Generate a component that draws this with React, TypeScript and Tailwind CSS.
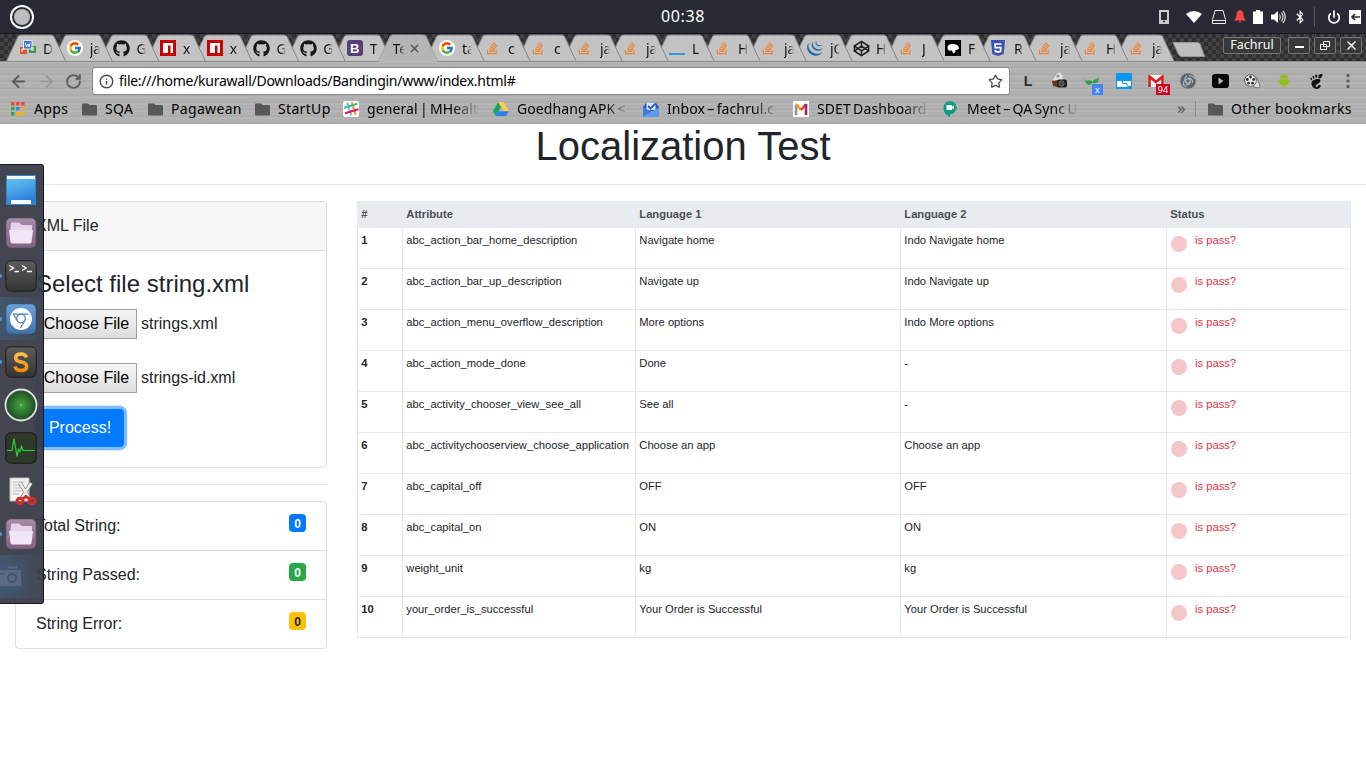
import type { ReactNode } from "react";
import { FcGoogle } from "react-icons/fc";
import { FaGithub, FaStackOverflow, FaBluetoothB } from "react-icons/fa";
import { SiJquery, SiGnome } from "react-icons/si";
import { ArrowLeft, ArrowRight, Codepen as CodepenOutline, Info, Power, RotateCw, Star, X } from "lucide-react";

/* ---------- tab favicons ---------- */

const Google = () => (
  <span className="flex size-4 items-center justify-center rounded-full bg-white">
    <FcGoogle size={14} />
  </span>
);
const Stack = () => <FaStackOverflow size={14} className="text-[#f08030]" />;
const Github = () => <FaGithub size={17} className="text-[#181616]" />;
const Npm = () => (
  <svg width="16" height="16" viewBox="0 0 16 16">
    <rect width="16" height="16" fill="#cb0000" />
    <path d="M3 3h10v10h-2.500V5.500H8V13H3z" fill="#fff" />
  </svg>
);
const Docs = () => (
  <svg width="16" height="16" viewBox="0 0 16 16">
    <rect x="0" y="7" width="7" height="7" fill="#e8542c" />
    <rect x="9" y="6" width="7" height="7" fill="#3c9a46" />
    <rect x="3.500" y="0.500" width="8.500" height="8.500" fill="#3c78d8" stroke="#dfe8f8" />
    <path d="M5.500 3l1 4 1.300-3 1.300 3 1-4M2 12V9h2.500M11 8h3M11 10h3" stroke="#fff" fill="none" />
  </svg>
);
const Boot = () => (
  <span className="flex size-4 items-center justify-center rounded-[3px] bg-[#563d7c] font-['Liberation_Sans',sans-serif] text-[13px] leading-none font-bold text-white">B</span>
);
const Line = () => <span className="mt-[11px] block h-0.5 w-4 bg-[#3b8eea]" />;
const Jquery = () => <SiJquery size={16} className="text-[#1b6fae]" />;
const Codepen = () => <CodepenOutline size={17} strokeWidth={2.2} className="text-[#222]" />;
const Lion = () => (
  <svg width="16" height="16" viewBox="0 0 16 16">
    <rect width="16" height="16" />
    <path d="M2.500 8c0-3 2-4 5-4 4 0 6.500 2 6.500 4 0 1.500-2 2-3.500 2L10 12.500 8 13.500 7 10.500c-2 0-2 .5-3 0S2.500 9 2.500 8z" fill="#fff" />
  </svg>
);
const Five = () => (
  <svg width="14" height="16" viewBox="0 0 14 16">
    <path d="M0 0h14l-1.300 14L7 16l-5.700-2z" fill="#3f51b5" />
    <path d="M10.500 4H4l.3 3.700h5.500l-.3 3.600-2.500.8-2.500-.8-.1-1.500" stroke="#fff" strokeWidth="1.700" fill="none" />
  </svg>
);

type Tab = { icon: () => ReactNode; text: string };
const leftTabs: Tab[] = [
  { icon: Docs, text: "D" },
  { icon: Google, text: "ja" },
  { icon: Github, text: "G" },
  { icon: Npm, text: "x" },
  { icon: Npm, text: "x" },
  { icon: Github, text: "G" },
  { icon: Github, text: "G" },
  { icon: Boot, text: "T" },
];
const rightTabs: Tab[] = [
  { icon: Google, text: "ta" },
  { icon: Stack, text: "c" },
  { icon: Stack, text: "c" },
  { icon: Stack, text: "ja" },
  { icon: Stack, text: "ja" },
  { icon: Line, text: "L" },
  { icon: Stack, text: "H" },
  { icon: Stack, text: "ja" },
  { icon: Jquery, text: "jQ" },
  { icon: Codepen, text: "H" },
  { icon: Stack, text: "J" },
  { icon: Lion, text: "F" },
  { icon: Five, text: "R" },
  { icon: Stack, text: "ja" },
  { icon: Stack, text: "H" },
  { icon: Stack, text: "ja" },
];

const tabStarts = [
  ...leftTabs.map((_, i) => 6 + i * 46.6),
  ...rightTabs.map((_, i) => 424.5 + i * 46),
].reverse();

const shape = (x: number) =>
  `M${x} 28L${x + 12} 2.500Q${x + 13} 1 ${x + 15} 1H${x + 45}Q${x + 47} 1 ${x + 48} 2.500L${x + 60} 28`;

function TabShapes() {
  return (
    <svg className="absolute inset-0" width="1366" height="28">
      {tabStarts.map((x) => (
        <path key={x} d={shape(x)} fill="#c3c3c3" stroke="#858585" />
      ))}
      <path d="M0 27.500H1366" stroke="#8a8a8a" />
      <path d={shape(378)} fill="#b5b5b5" stroke="#a5a5a5" />
      <path d="M1173 8.500H1197Q1199 8.500 1200 10L1204.500 22.500H1183Q1180 22.500 1179 21Z" fill="#bdbdbd" stroke="#999" />
    </svg>
  );
}

const fade = "[mask-image:linear-gradient(to_right,#000_50%,transparent_100%)]";
const longFade = "tracking-[0.1px] [word-spacing:-1.5px] [mask-image:linear-gradient(to_right,#000_75%,transparent_100%)]";

function TabItem({ tab, wide }: { tab: Tab; wide: boolean }) {
  const Icon = tab.icon;
  return (
    <div className={`flex h-full shrink-0 items-center ${wide ? "w-[46.7px]" : "w-[46px]"}`}>
      <span className="flex w-[23px] shrink-0"><Icon /></span>
      <span className={`w-[10px] overflow-hidden whitespace-nowrap ${fade}`}>{tab.text}</span>
    </div>
  );
}

/* ---------- browser chrome ---------- */

function TopBar() {
  return (
    <header className="relative flex h-[34px] items-center border-b border-[#15161c] bg-[#282a36] pr-[5px] pl-[10px] text-white">
      <span className="flex size-6 items-center justify-center rounded-full border-2 border-white">
        <span className="size-4 rounded-full bg-[#bdbdbd]" />
      </span>
      <span className="ml-[627px] w-12 -translate-y-px text-[16px] leading-none tracking-[0.6px]">00:38</span>
      <div className="ml-auto flex items-center">
        <svg width="10" height="14" viewBox="0 0 10 14"><path d="M1 1h8v12H1z" fill="none" stroke="#ccc" strokeWidth="2" /><path d="M1 10h8v3H1z" fill="#ccc" /><circle cx="5" cy="11.500" r="1" fill="#282a36" /></svg>
        <svg className="ml-[17px]" width="16" height="12" viewBox="0 0 16 12"><path d="M0 3Q8-3 16 3L8 12z" fill="#fff" /></svg>
        <svg className="ml-[10px]" width="14" height="14" viewBox="0 0 14 14" fill="none" stroke="#eee"><path d="M3 .5h8l2.500 9v4H.5v-4zM.5 10.500h13" /></svg>
        <svg className="ml-2" width="12" height="13" viewBox="0 0 12 13"><path d="M6 0C3 .8 2.500 3 2.500 5S1.500 9 0 10.500h12C10.500 9 9.500 7 9.500 5S9 .8 6 0zM4.500 11.500h3L6 13z" fill="#f44" /></svg>
        <svg className="ml-[7px]" width="10" height="14" viewBox="0 0 10 14"><path d="M3 0h4v1.500h3V14H0V1.500h3z" fill="#fff" /></svg>
        <svg className="ml-2" width="15" height="14" viewBox="0 0 15 14"><path d="M0 4.500h3L7 1v12L3 9.500H0z" fill="#fff" /><path d="M8.500 4.500q1.500 2.500 0 5M10.500 2.500q3 4.500 0 9M12 .8q4.500 6.200 0 12.400" fill="none" stroke="#ddd" strokeWidth="1.200" /></svg>
        <FaBluetoothB className="ml-[7px]" size={14} />
        <span className="ml-[7px] h-5 w-px bg-[#50525e]" />
        <Power className="ml-3" size={14} strokeWidth={3} />
        <svg className="ml-[8px]" width="12" height="14" viewBox="0 0 12 14"><path d="M0 0h12v14H0z" fill="#fff" /><path d="M11 7H4M6 4L3 7l3 3" fill="none" stroke="#282a36" strokeWidth="1.600" /></svg>
      </div>
    </header>
  );
}

const winButton = "flex h-[17px] w-[22px] items-center justify-center rounded-[2px] border border-[#777] bg-[#3a3a3a]/70";

function TabStrip() {
  return (
    <div className="relative h-7 bg-[repeating-conic-gradient(#303030_0_25%,#424242_0_50%)] bg-[length:8px_8px]">
      <TabShapes />
      <div className="relative flex h-full pl-5 text-[14px] text-[#111]">
        {leftTabs.map((t, i) => <TabItem key={i} tab={t} wide />)}
        <div className="flex h-full w-[45.4px] shrink-0 items-center">
          <span className={`-ml-px w-[12px] overflow-hidden ${fade}`}>Te</span>
          <X className="ml-[3px]" size={13} strokeWidth={2.5} color="#555" />
        </div>
        {rightTabs.map((t, i) => <TabItem key={i} tab={t} wide={false} />)}
        <div className="absolute top-[3px] right-1 flex gap-1">
          <span className="mr-[3px] flex h-[17px] w-[58px] items-center justify-center rounded-[2px] border border-[#777] bg-[#3a3a3a]/70 text-[12.500px] text-white">Fachrul</span>
          <span className={winButton}><span className="mt-[3px] h-[2px] w-[9px] bg-white" /></span>
          <span className={winButton}><svg width="10" height="9" viewBox="0 0 10 9" fill="none" stroke="#eee"><path d="M3.500.5h6v5h-6zM.5 3.500h6v5h-6z" /></svg></span>
          <span className={winButton}><svg width="9" height="9" viewBox="0 0 9 9" stroke="#fff" strokeWidth="1.500"><path d="M.5.5l8 8M8.500.5l-8 8" /></svg></span>
        </div>
      </div>
    </div>
  );
}

const extensions: ReactNode[] = [
  <span className="font-['Liberation_Sans',sans-serif] text-[14px] font-bold text-[#2d2d2d]">L</span>,
  <svg width="16" height="16" viewBox="0 0 16 16"><path d="M4 2l1.500-2h3L10 2l1 4-2 2H3L1 7z" fill="#e4e1ea" /><path d="M0 8l7-1v7.500L1 13z" fill="#6b3718" /><circle cx="6" cy="3" r="1.500" fill="#8b8b95" /><rect x="5" y="6.500" width="10" height="8" rx="2" fill="#1d1d1d" /><circle cx="9.500" cy="10.500" r="2.700" fill="#444" stroke="#999" strokeWidth=".6" /></svg>,
  <span className="relative flex size-4"><svg width="16" height="16" viewBox="0 0 16 16"><path d="M0 6l2 1.500h5l1.500 1 1.500-1.500 5-2-1 4-3.500 1.500L8.500 9.500 6 12l-3.500-1z" fill="#3b9a48" /></svg><span className="absolute top-[11px] left-2 flex h-[11px] w-[11px] items-center justify-center bg-[#4285f4] text-[9px] leading-none text-white">x</span></span>,
  <svg width="16" height="16" viewBox="0 0 16 16"><rect width="16" height="16" rx="1" fill="#0a97f5" /><path d="M1 8h4.500q.3 3 1.800 3h3q.3 2.500 2 3H1z" fill="#fff" /><path d="M7 8h8v5h-2.500q-1.200-.5-1.500-3H8Q7 10 7 8z" fill="#fff" /></svg>,
  <span className="relative flex size-4"><svg width="16" height="12" viewBox="0 0 16 12" className="mt-0.5"><rect width="16" height="12" rx="1" fill="#f4f4f4" /><path d="M1.500 12V1.500L8 7l6.500-5.500V12" fill="none" stroke="#d8201a" strokeWidth="2.600" /></svg><span className="absolute top-[11px] left-2 flex h-[11px] w-[14px] items-center justify-center bg-[#d0021b] text-[9px] leading-none text-white">94</span></span>,
  <svg width="16" height="16" viewBox="0 0 16 16" fill="none"><circle cx="8" cy="8" r="7.800" fill="#5c656d" /><g stroke="#b7bcc0" strokeWidth="1.100"><circle cx="8" cy="8" r="2.300" /><path d="M8 5.500C11 5 13 7 12.500 10M10.500 8c0 3-2.500 4.500-5 3.500M6 9.500C4 7 4.500 4.500 7 3M4 8C2.500 11 4 13 6 14M9 3c3-1 5 1 5.500 3" /></g></svg>,
  <svg width="17" height="14" viewBox="0 0 17 14"><rect width="17" height="14" rx="3" fill="#050505" /><path d="M6.500 3.500v7l5-3.500z" fill="#bbb" /></svg>,
  <svg width="17" height="15" viewBox="0 0 17 15"><path d="M9 1l4 3 3 8-1 2-5-1-3-6z" fill="#ddd" stroke="#555" strokeWidth=".7" /><circle cx="6.500" cy="6.500" r="5.900" fill="#e9e9e9" stroke="#444" strokeWidth=".8" /><g fill="#333"><circle cx="6.500" cy="3" r="1.400" /><circle cx="3.300" cy="5.500" r="1.400" /><circle cx="4.500" cy="9.200" r="1.400" /><circle cx="8.500" cy="9.200" r="1.400" /><circle cx="9.700" cy="5.500" r="1.400" /></g></svg>,
  <svg width="12" height="14" viewBox="0 0 12 14" fill="#93bd1e"><path d="M2 4.500a4 3.700 0 018 0zM2 5.200h8V10a1 1 0 01-1 1H8v2.500H6.600V11H5.400v2.500H4V11H3a1 1 0 01-1-1zM0 5.500h1.300v4H0zM10.700 5.500H12v4h-1.300z" /><path d="M3 0l1 2M9 0L8 2" stroke="#93bd1e" strokeWidth=".6" /></svg>,
  <SiGnome size={15} color="#111" />,
  <svg width="4" height="14" viewBox="0 0 4 14" fill="#5a5a5a"><rect x=".5" y="0" width="3" height="3" rx="1" /><rect x=".5" y="5.500" width="3" height="3" rx="1" /><rect x=".5" y="11" width="3" height="3" rx="1" /></svg>,
];

function AddressBar() {
  return (
    <div className="flex h-9 items-center pl-[9px] text-[#4c4c4c]">
      <ArrowLeft size={19} strokeWidth={2.4} className="text-[#5a5a5a]" />
      <ArrowRight className="ml-[9px] text-[#979797]" size={19} strokeWidth={2.2} />
      <RotateCw className="ml-[9px] text-[#5f5f5f]" size={17} strokeWidth={2.8} />
      <div className="ml-[10px] flex h-7 w-[918px] items-center rounded-[3px] border border-[#8a8a8a] bg-white pr-[6px] pl-[6px]">
        <Info size={15} strokeWidth={2.3} />
        <span className="ml-[5px] text-[14px] leading-none tracking-[-0.270px] text-black">file:///home/kurawall/Downloads/Bandingin/www/index.html#</span>
        <Star className="ml-auto" size={15} strokeWidth={2} />
      </div>
      <div className="ml-[2px] flex">
        {extensions.map((e, i) => <span key={i} className="flex h-5 w-8 items-center justify-center">{e}</span>)}
      </div>
    </div>
  );
}

const FolderIcon = () => (
  <svg width="15" height="13" viewBox="0 0 15 13"><path d="M1 .5h5L7.500 2H14q1 0 1 1v8.500q0 1-1 1H1q-1 0-1-1v-10q0-1 1-1z" fill="#585858" /></svg>
);
const AppsIcon = () => (
  <svg width="14" height="14" viewBox="0 0 14 14">
    {["#f44336", "#f44336", "#f44336", "#2fa84f", "#3b82f6", "#f5a623", "#2fa84f", "#f5b400", "#f5b400"].map((c, i) => (
      <rect key={i} x={(i % 3) * 5} y={Math.floor(i / 3) * 5} width="3.500" height="3.500" fill={c} />
    ))}
  </svg>
);
const SlackIcon = () => (
  <svg width="16" height="16" viewBox="0 0 16 16"><rect width="16" height="16" rx="2" fill="#fff" /><g strokeWidth="2.300" strokeLinecap="round"><path d="M4.500 2.500l3.500 11" stroke="#6ecadc" /><path d="M9 1.800l3.500 11" stroke="#e9a820" /><path d="M2 6.500l11.500-3.500" stroke="#3eb991" /><path d="M3 12l11.500-3.500" stroke="#e01765" /></g></svg>
);
const DriveIcon = () => (
  <svg width="16" height="14" viewBox="0 0 16 14"><path d="M5.300 0L0 9.300 2.700 14 8 4.700z" fill="#11a861" /><path d="M5.300 0h5.400L16 9.300h-5.300z" fill="#ffcf48" /><path d="M5.300 9.300H16L13.300 14H2.700z" fill="#2d7ff9" /></svg>
);
const InboxIcon = () => (
  <svg width="16" height="15" viewBox="0 0 16 15"><path d="M0 5l3-4h10l3 4v4H0z" fill="#2a56c6" /><path d="M3.500 1h9v7h-9z" fill="#dfe8f8" /><path d="M5 4l2.500 2.500L12.500 1.500" fill="none" stroke="#2a56c6" strokeWidth="1.800" /><path d="M0 5.500l8 4 8-4V14q0 1-1 1H1q-1 0-1-1z" fill="#5a9bf0" /><path d="M0 5.500l8 4-8 5z" fill="#3f7be0" /></svg>
);
const SdetIcon = () => (
  <svg width="16" height="16" viewBox="0 0 16 16" fill="none" strokeWidth="2.600"><rect width="16" height="16" fill="#fff" /><path d="M3 14V4" stroke="#8b93a0" /><path d="M3 3l5 6" stroke="#f39a1e" /><path d="M8 9l5-6" stroke="#e0452f" /><path d="M13 3v11" stroke="#a81e62" /></svg>
);
const MeetIcon = () => (
  <svg width="14" height="16" viewBox="0 0 14 16"><path d="M7 0a6.500 6.500 0 010 13.200V16C2 13.500.5 10 .5 6.700A6.500 6.500 0 017 0z" fill="#0b9a84" /><rect x="3.500" y="4" width="5.500" height="5" rx=".6" fill="#fff" /><path d="M9 6l2-1.500v4L9 7z" fill="#fff" /></svg>
);

const bookmarks: { icon: ReactNode; text: string; box: string; label?: string }[] = [
  { icon: <AppsIcon />, text: "Apps", box: "w-[71px]" },
  { icon: <FolderIcon />, text: "SQA", box: "w-[66px]" },
  { icon: <FolderIcon />, text: "Pagawean", box: "w-[107px]" },
  { icon: <FolderIcon />, text: "StartUp", box: "w-[88px]" },
  { icon: <SlackIcon />, text: "general | MHealt", box: "w-[150px]", label: `w-[113px] ${longFade}` },
  { icon: <DriveIcon />, text: "Goedhang APK <", box: "w-[150px]", label: `w-[115px] ${longFade}` },
  { icon: <InboxIcon />, text: "Inbox – fachrul.c", box: "w-[150px]", label: `w-[113px] ${longFade}` },
  { icon: <SdetIcon />, text: "SDET Dashboard", box: "w-[150px]", label: `w-[113px] ${longFade}` },
  { icon: <MeetIcon />, text: "Meet – QA Sync U", box: "w-[150px]", label: `w-[113px] ${longFade}` },
];

function BookmarksBar() {
  return (
    <div className="flex h-5 items-center pl-[11px] text-[14px] leading-5 tracking-[0.330px] text-black">
      {bookmarks.map((b) => (
        <div key={b.text} className={`flex shrink-0 items-center ${b.box}`}>
          <span className={`flex shrink-0 ${b.label ? "w-6" : "w-[23px]"}`}>{b.icon}</span>
          <span className={`overflow-hidden whitespace-nowrap ${b.label ?? ""}`}>{b.text}</span>
        </div>
      ))}
      <span className="ml-[84px] w-[18px] -translate-y-[2px] text-[17px] leading-none text-[#555]">»</span>
      <span className="h-4 w-px bg-[#8e8e8e]" />
      <span className="ml-[12px] flex w-[23px]"><FolderIcon /></span>
      <span className="whitespace-nowrap">Other bookmarks</span>
    </div>
  );
}

/* ---------- page ---------- */

const rows = [
  ["abc_action_bar_home_description", "Navigate home", "Indo Navigate home"],
  ["abc_action_bar_up_description", "Navigate up", "Indo Navigate up"],
  ["abc_action_menu_overflow_description", "More options", "Indo More options"],
  ["abc_action_mode_done", "Done", "-"],
  ["abc_activity_chooser_view_see_all", "See all", "-"],
  ["abc_activitychooserview_choose_application", "Choose an app", "Choose an app"],
  ["abc_capital_off", "OFF", "OFF"],
  ["abc_capital_on", "ON", "ON"],
  ["weight_unit", "kg", "kg"],
  ["your_order_is_successful", "Your Order is Successful", "Your Order is Successful"],
];

const gridCols = "grid grid-cols-[44px_233px_265px_266px_184px]";

function ResultTable() {
  return (
    <div className="w-[994px] self-start border border-[#e5e9ec] text-[11.200px] leading-[16.800px] text-[#212529]">
      <div className={`${gridCols} h-[25px] bg-[#e9ecef] font-bold text-[#495057]`}>
        {["#", "Attribute", "Language 1", "Language 2", "Status"].map((h) => (
          <div key={h} className="pt-[3.800px] pl-[4.300px] first:pl-[3.300px]">{h}</div>
        ))}
      </div>
      {rows.map((r, i) => (
        <div key={r[0]} className={`${gridCols} h-[41px] border-t border-[#e5e9ec]`}>
          <div className="pt-[4px] pl-[3.300px] font-bold">{i + 1}</div>
          {r.map((c, j) => (
            <div key={j} className="border-l border-[#e5e9ec] pt-[4px] pl-[3.300px] whitespace-nowrap">{c}</div>
          ))}
          <div className="-mr-px flex border-l border-[#e5e9ec] pl-[4px] text-[#dc3545]">
            <span className="mt-2 size-4 rounded-full bg-[#f5c6cb]" />
            <span className="pt-[4px] pl-2">is pass?</span>
          </div>
        </div>
      ))}
    </div>
  );
}

function FileRow({ name }: { name: string }) {
  return (
    <div className="flex h-[30px] items-center">
      <span className="flex h-[30px] w-[101px] items-center justify-center border border-[#a0a0a0] bg-linear-to-b from-[#f6f6f6] to-[#dddddd] text-black">Choose File</span>
      <span className="ml-1">{name}</span>
    </div>
  );
}

const stats = [
  { label: "Total String:", badge: "bg-[#007bff] text-white" },
  { label: "String Passed:", badge: "bg-[#28a745] text-white" },
  { label: "String Error:", badge: "bg-[#ffc107] text-[#212529]" },
];

function SidePanel() {
  return (
    <div className="w-[312px]">
      <section className="h-[267px] rounded-[4px] border border-[#dfdfdf]">
        <div className="flex h-[49px] items-center border-b border-[#dfdfdf] bg-[#f7f7f7] pl-5">XML File</div>
        <div className="pt-[18px] pl-5">
          <h4 className="mb-[11px] text-[24px] leading-[29px]">Select file string.xml</h4>
          <FileRow name="strings.xml" />
          <div className="mt-6"><FileRow name="strings-id.xml" /></div>
          <button className="mt-4 h-[38px] w-[88px] rounded-[4px] bg-[#007bff] text-white shadow-[0_0_0_3.200px_#80bdff]">Process!</button>
        </div>
      </section>
      <div className="my-4 h-px bg-[#e5e5e5]" />
      <ul className="rounded-[4px] border border-[#dfdfdf]">
        {stats.map((s) => (
          <li key={s.label} className="flex h-[49px] justify-between border-t border-[#dfdfdf] px-5 pt-3 first:h-12 first:border-t-0">
            {s.label}
            <span className={`flex h-[18px] w-[17px] items-center justify-center rounded-[4px] pt-px text-[12px] leading-none font-bold ${s.badge}`}>0</span>
          </li>
        ))}
      </ul>
    </div>
  );
}

/* ---------- dock ---------- */

const FolderApp = () => (
  <svg width="32" height="32" viewBox="0 0 32 32">
    <defs><linearGradient id="fa" x2="0" y2="1"><stop stopColor="#a48ca6" /><stop offset="1" stopColor="#826184" /></linearGradient></defs>
    <rect x="1" y="1" width="30" height="30" rx="5" fill="url(#fa)" stroke="#5c4a62" strokeWidth=".6" />
    <path d="M6 8V6.500q0-1 1-1h7l3 2.500h9q1 0 1 1v5H5z" fill="#e5d2ec" />
    <path d="M4 13h24l-1.500 12q-.3 1.500-2 1.500h-17Q6 26.500 5.500 25z" fill="#f2e4f7" />
  </svg>
);

const darkTile = <rect x=".8" y=".8" width="30.400" height="30.400" rx="5" fill="url(#dk)" stroke="#1d1d20" />;
const darkDefs = <defs><linearGradient id="dk" x2="0" y2="1"><stop stopColor="#5c5c5c" /><stop offset="1" stopColor="#343434" /></linearGradient></defs>;

const dockApps: { icon: ReactNode; dot?: boolean; glow?: boolean }[] = [
  {
    icon: (
      <svg width="32" height="32" viewBox="0 0 32 32">
        <defs><linearGradient id="ds" x2=".3" y2="1"><stop stopColor="#6cc4ee" /><stop offset=".5" stopColor="#4ba9e9" /><stop offset="1" stopColor="#2c7bdc" /></linearGradient></defs>
        <rect x="1.500" y="1.500" width="29" height="29" fill="url(#ds)" stroke="#2f86c8" />
        <path d="M2 2h28v3H2z" fill="#f2f8fb" /><path d="M6 30v-3q0-1 1-1h18q1 0 1 1v3z" fill="#fff" />
      </svg>
    ),
  },
  { icon: <FolderApp /> },
  {
    dot: true,
    icon: (
      <svg width="32" height="32" viewBox="0 0 32 32">{darkDefs}{darkTile}
        <path d="M4.500 5.500l4 2.500-4 2.500M17 5.500l4 2.500-4 2.500M9.500 11.500H14M22 11.500h5" stroke="#fff" strokeWidth="1.400" fill="none" />
      </svg>
    ),
  },
  {
    dot: true,
    glow: true,
    icon: (
      <svg width="32" height="32" viewBox="0 0 32 32">
        <defs><linearGradient id="cr" x2="0" y2="1"><stop stopColor="#6ba2d8" /><stop offset="1" stopColor="#3f72ab" /></linearGradient></defs>
        <rect x="1" y="1" width="30" height="30" rx="5" fill="url(#cr)" stroke="#2d5480" strokeWidth=".6" />
        <circle cx="16" cy="16" r="11" fill="#fff" />
        <g fill="none" stroke="#5286bd" strokeWidth="1.300"><circle cx="16" cy="15.500" r="4.300" /><path d="M8 11.200h15.500M12.300 17.700L8.500 11.500M19.700 17.700L15.500 25" /></g>
      </svg>
    ),
  },
  {
    dot: true,
    icon: (
      <svg width="32" height="32" viewBox="0 0 32 32">{darkTile}
        <defs><linearGradient id="su" x2="0" y2="1"><stop stopColor="#ffc04a" /><stop offset="1" stopColor="#f58a0b" /></linearGradient></defs>
        <path d="M21.500 11.500Q20.500 8 16 8q-5.300 0-5.300 4 0 3 5.300 4 5.700 1 5.700 4.300Q21.700 24.500 16 24.500q-5 0-6-4" stroke="url(#su)" strokeWidth="3.600" fill="none" />
      </svg>
    ),
  },
  {
    icon: (
      <svg width="34" height="34" viewBox="0 0 34 34">
        <defs><radialGradient id="gr"><stop stopColor="#46a048" /><stop offset=".6" stopColor="#2c702f" /><stop offset="1" stopColor="#21482a" /></radialGradient></defs>
        <circle cx="17" cy="17" r="15.500" fill="url(#gr)" stroke="#e2e2e2" strokeWidth="1.800" /><circle cx="17" cy="17" r="1.200" fill="#43df4d" />
      </svg>
    ),
  },
  {
    icon: (
      <svg width="32" height="32" viewBox="0 0 32 32">
        <rect x=".8" y=".8" width="30.400" height="30.400" rx="5" fill="#2f392b" stroke="#151a16" />
        <path d="M2 18.500h5l2-12 3 18 1.500-7 1.500 2 1.500-5 1.500 4h12" fill="none" stroke="#2bd12f" strokeWidth="1.200" />
      </svg>
    ),
  },
  {
    icon: (
      <svg width="32" height="32" viewBox="0 0 32 32">
        <path d="M5 3h19v23H5z" fill="#f3f3f1" stroke="#bdbdb8" />
        <path d="M8 7h12M8 10h10M8 13h7M8 16h8M8 19h6" stroke="#bbb" />
        <path d="M15 8l9 15M26 8l-9 15" stroke="#777" strokeWidth="4" /><path d="M15 8l9 15M26 8l-9 15" stroke="#ececec" strokeWidth="2.600" />
        <g fill="none" stroke="#d42b2f" strokeWidth="3"><ellipse cx="15" cy="26" rx="3" ry="2.800" /><ellipse cx="27" cy="26" rx="3" ry="2.800" /><path d="M17.500 24L21 21.500l4 2.500" /></g>
      </svg>
    ),
  },
  { dot: true, icon: <FolderApp /> },
  {
    glow: true,
    icon: (
      <svg className="mr-6 shrink-0 opacity-40" width="32" height="32" viewBox="0 0 32 32">
        <rect x="1" y="1" width="30" height="30" rx="5" fill="#3f5b82" />
        <path d="M3 10h24v14H3zM15 6.500h9" fill="#7d8ea6" stroke="#7d8ea6" strokeWidth="2" /><circle cx="19" cy="17" r="4" fill="#7d8ea6" stroke="#455b7b" strokeWidth="2" /><path d="M6 13h6" stroke="#455b7b" />
      </svg>
    ),
  },
];

function Dock() {
  return (
    <nav className="absolute top-[164px] left-0 h-[440px] w-11 overflow-hidden rounded-r-[3px] border border-l-0 border-[#15161f] bg-[#393c48]/95 pt-[3px]">
      {dockApps.map((a, i) => (
        <div key={i} className={`relative flex h-[43px] items-center justify-center pr-[1px] ${a.glow ? "bg-linear-to-r from-[#416080]/60 to-[#416080]/5" : ""}`}>
          {a.dot && <span className="absolute top-5 left-[-2px] size-1 rounded-full bg-[#4a98f0]" />}
          {a.icon}
        </div>
      ))}
    </nav>
  );
}

export default function App() {
  return (
    <div className="relative h-[768px] w-[1366px] overflow-hidden bg-white font-['Noto_Sans',sans-serif]">
      <TopBar />
      <TabStrip />
      <div className="h-[62px] bg-[#b2b2b2] bg-[repeating-linear-gradient(to_bottom,#b9b9b9_0px,#adadad_2px,#b5b5b5_3px,#a9a9a9_5px,#b7b7b7_7px)] pt-px">
        <AddressBar />
        <BookmarksBar />
      </div>
      <main className="font-['Liberation_Sans',Arial,sans-serif] text-[16px] leading-6 text-[#212529]">
        <h1 className="h-[60px] text-center text-[40px] leading-[44px]">Localization Test</h1>
        <div className="h-px bg-[#e5e5e5]" />
        <div className="flex gap-[30px] pt-4 pl-[15px]">
          <SidePanel />
          <ResultTable />
        </div>
      </main>
      <Dock />
    </div>
  );
}
